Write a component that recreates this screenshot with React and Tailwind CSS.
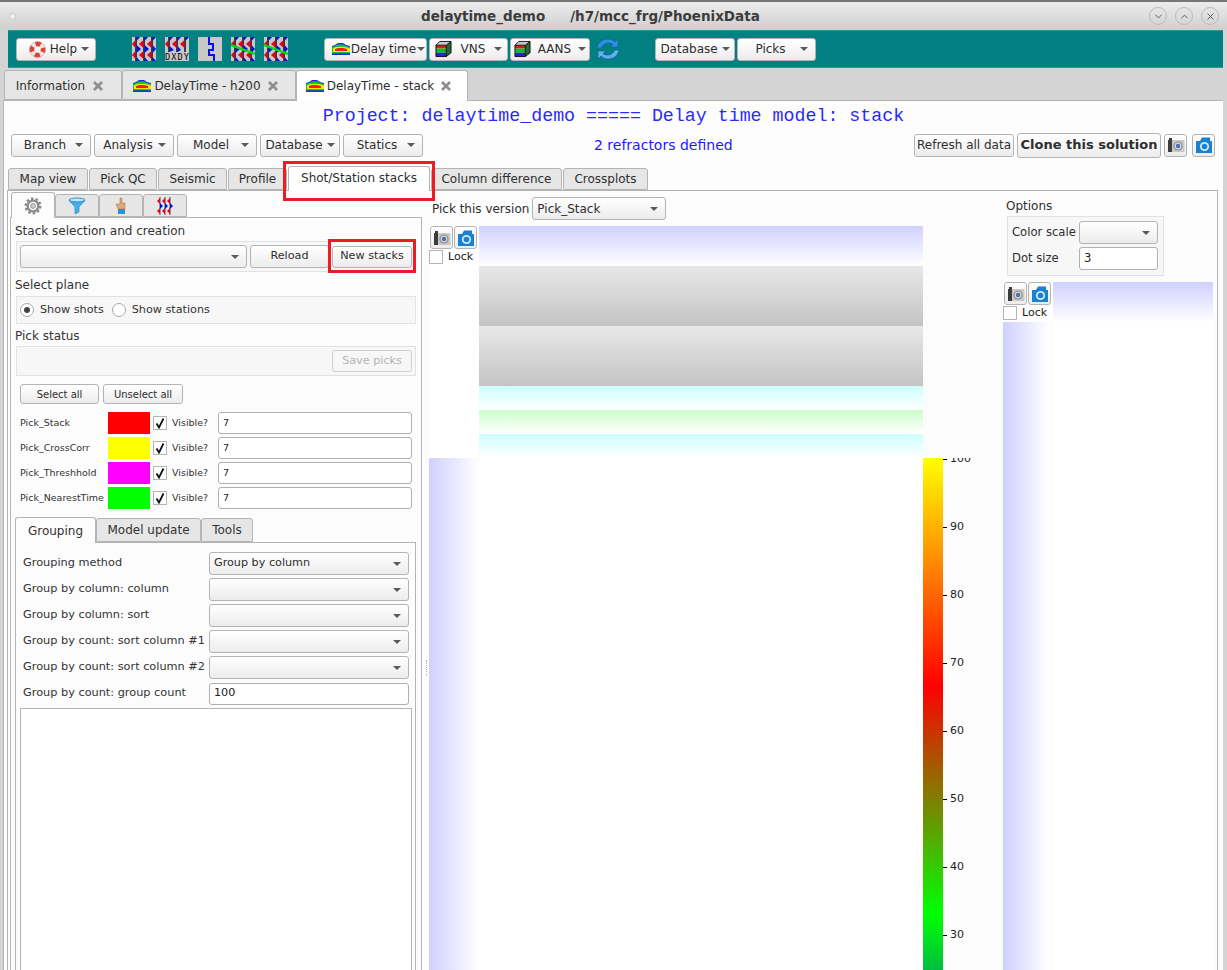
import React from 'react'
import { ChevronDown, ChevronUp, X } from 'lucide-react'

const btn = "flex items-center justify-center rounded-[3px] border border-[#b4b4b4] bg-linear-to-b from-white to-[#ececec] text-[#2e2e2e]"
const caret = "ml-auto w-0 h-0 border-x-[4px] border-x-transparent border-t-[4px] border-t-[#5a5a5a]"
const inputBox = "flex items-center rounded-[3px] border border-[#b0b0b0] bg-white px-[4px] text-[#222]"

const Wiggle = ({ variant }) => {
  const dxdy = variant === 'dxdy'
  return (
    <svg width="24" height="24" viewBox="0 0 24 24" className="shrink-0">
      <rect width="24" height="24" fill="#c8c8c8" />
      <path d={dxdy ? "M4 0V15M12 0V15M20 0V15" : "M4 0V24M12 0V24M20 0V24"} stroke="#000" strokeWidth="1.4" />
      {!dxdy && <>
        <path d="M3.5 3L0 7L3.5 11ZM11.5 3L7 7L11.5 11ZM19.5 3L15 7L19.5 11ZM3.5 14L0 18L3.5 22ZM11.5 14L7 18L11.5 22ZM19.5 14L15 18L19.5 22Z" fill="#e8001c" />
        <path d="M4.5 0H8L4.5 4ZM12.5 0H16L12.5 4ZM20.5 0H24L20.5 4ZM4.5 8L9 12L4.5 16ZM12.5 8L17 12L12.5 16ZM20.5 8L24 12L20.5 16ZM4.5 20L8 24H4.5ZM12.5 20L16 24H12.5ZM20.5 20L24 24H20.5Z" fill="#0010e0" />
      </>}
      {dxdy && <>
        <path d="M3.5 3L0 7L3.5 11ZM11.5 3L7 7L11.5 11ZM19.5 3L15 7L19.5 11Z" fill="#e8001c" />
        <path d="M4.5 0H8L4.5 4ZM12.5 0H16L12.5 4ZM20.5 0H24L20.5 4ZM4.5 9L9 13L4.5 15ZM12.5 9L16 13L12.5 15Z" fill="#0010e0" />
        <text x="12" y="23" textAnchor="middle" fontFamily="'DejaVu Sans Mono',monospace" fontSize="8.6" fill="#000" textLength="24">DXDY</text>
      </>}
      {variant === 'green' && <path d="M0 8L24 17" stroke="#00e000" strokeWidth="2.4" />}
    </svg>
  )
}

const Step = () => (
  <svg width="24" height="24" viewBox="0 0 24 24" className="shrink-0">
    <rect width="24" height="24" fill="#c8c8c8" />
    <path d="M11 0V7H15V13H11V18H16V24" fill="none" stroke="#0010ff" strokeWidth="2" />
  </svg>
)

const Layers = () => (
  <svg width="18" height="12" viewBox="0 0 18 12" className="shrink-0">
    <path d="M0 3L3 2L6 0H11L14 2L18 3V12H0Z" fill="#2030e0" />
    <path d="M0 4L3 3L6 1.5H11L14 3L18 4V10.5H0Z" fill="#18c830" />
    <path d="M1 5.5L4 4H13L18 5.5V9H1Z" fill="#f4e800" />
    <path d="M3 6L6 5H11L15 6V8H3Z" fill="#f02020" />
    <path d="M0 10.5H18V12H0Z" fill="#2030e0" />
  </svg>
)

const Cube = () => (
  <svg width="17" height="18" viewBox="0 0 18 18" className="shrink-0">
    <path d="M1 5H12V8.5H1Z" fill="#e01818" />
    <path d="M1 8.5H12V13H1Z" fill="#18b818" />
    <path d="M1 13H12V17H1Z" fill="#1828e0" />
    <path d="M1 5L5 1H17L12 5Z" fill="#c8c8c8" />
    <path d="M12 5L17 1V13L12 17Z" fill="#286838" />
    <path d="M1 5H12V17H1ZM1 5L5 1H17V13L12 17M12 5L17 1" fill="none" stroke="#000" strokeWidth="0.9" />
  </svg>
)

const Buoy = () => (
  <svg width="17" height="17" viewBox="0 0 18 18" className="shrink-0">
    <circle cx="9" cy="9" r="6" fill="none" stroke="#e9e4e0" strokeWidth="5" />
    <circle cx="9" cy="9" r="6" fill="none" stroke="#e04030" strokeWidth="5" strokeDasharray="5.4 4" strokeDashoffset="2.7" />
    <circle cx="9" cy="9" r="8.4" fill="none" stroke="#b0a8a0" strokeWidth="0.5" />
  </svg>
)

const Refresh = () => (
  <svg width="26" height="26" viewBox="0 0 26 26" className="shrink-0">
    <path d="M2 12C3 6 8 3 13 3C17 3 19 5 20 6L23 3V11H15L18 8.5C15 6 9 6 6 12Z" fill="#2f8fe0" stroke="#12589c" strokeWidth="0.6" />
    <path d="M24 14C23 20 18 23 13 23C9 23 7 21 6 20L3 23V15H11L8 17.5C11 20 17 20 20 14Z" fill="#5eb0ee" stroke="#12589c" strokeWidth="0.6" />
  </svg>
)

const TabX = () => (
  <svg width="12" height="12" viewBox="0 0 12 12" className="shrink-0">
    <path d="M2 2L10 10M10 2L2 10" stroke="#8e8e8e" strokeWidth="2.6" />
  </svg>
)

const CamGray = () => (
  <svg width="18" height="18" viewBox="0 0 18 18">
    <rect x="1" y="4" width="4" height="12" fill="#3c3c3c" />
    <rect x="2" y="2" width="3" height="2" fill="#3c3c3c" />
    <rect x="5" y="4" width="12.5" height="12" rx="1" fill="#c8c8c8" />
    <circle cx="11" cy="10" r="4.6" fill="#8a8a8a" />
    <circle cx="11" cy="10" r="3.4" fill="#d8d8d8" />
    <circle cx="11" cy="10" r="2.2" fill="#4a70b8" />
  </svg>
)

const CamBlue = () => (
  <svg width="18" height="18" viewBox="0 0 18 18">
    <path d="M1 5H5L7 1.5H15V5H17V17H1Z" fill="#1a80d0" />
    <circle cx="9.5" cy="10.5" r="4.6" fill="#d0eafa" />
    <circle cx="9.5" cy="10.5" r="2.8" fill="#1a80d0" />
  </svg>
)

const CamBtn = ({ blue }) => (
  <div className={`${btn} w-[23px] h-[23px] shrink-0`}>{blue ? <CamBlue /> : <CamGray />}</div>
)

const Gear = () => (
  <svg width="18" height="18" viewBox="0 0 18 18">
    <circle cx="9" cy="9" r="7" fill="none" stroke="#8a8a8a" strokeWidth="3" strokeDasharray="2.4 2" />
    <circle cx="9" cy="9" r="5.4" fill="none" stroke="#8e8e8e" strokeWidth="2.4" />
    <circle cx="9" cy="9" r="2.4" fill="#d0d0d0" stroke="#808080" strokeWidth="0.8" />
  </svg>
)

const Funnel = () => (
  <svg width="18" height="18" viewBox="0 0 18 18">
    <ellipse cx="9" cy="3" rx="8" ry="2" fill="#bfe6fa" stroke="#2f9ad8" />
    <path d="M1 3.5L7 10V17L11 15V10L17 3.5Q9 7 1 3.5Z" fill="#47b0e8" stroke="#2484c0" strokeWidth="0.6" />
  </svg>
)

const Hand = () => (
  <svg width="14" height="18" viewBox="0 0 14 18">
    <path d="M6 1H8V6H11V12H4L2 7H6Z" fill="#dfa878" stroke="#a87048" strokeWidth="0.5" />
    <rect x="4" y="12" width="7" height="5" fill="#3090c8" />
  </svg>
)

const SmallWiggle = () => (
  <svg width="16" height="18" viewBox="0 0 16 18">
    <path d="M3 0V18M8 0V18M13 0V18" stroke="#222" strokeWidth="0.8" />
    <path d="M3 1L0 4L3 7ZM8 1L5 4L8 7ZM13 1L10 4L13 7ZM3 11L0 14L3 17ZM8 11L5 14L8 17ZM13 11L10 14L13 17Z" fill="#e8001c" />
    <path d="M3 6L6 9L3 12ZM8 6L11 9L8 12ZM13 6L16 9L13 12Z" fill="#0010e0" />
  </svg>
)

const MenuBtn = ({ label, w, icon, gap = "gap-[4px]", pad = "px-[7px]" }) => (
  <div className={`${btn} ${w} h-[23px] ${pad} ${gap} shrink-0 whitespace-nowrap`}>
    {icon}
    <span className={icon ? "" : "flex-1 text-center"}>{label}</span>
    <span className={caret} />
  </div>
)

const Combo = ({ w, h = "h-[23px]", text }) => (
  <div className={`${btn} ${w} ${h} px-[4px] shrink-0`}>
    <span>{text}</span>
    <span className={caret + " mr-[3px]"} />
  </div>
)

const Tab = ({ w, children, active }) => (
  <div className={`${w} flex items-center justify-center gap-[3px] shrink-0 border border-[#b4b4b4] rounded-t-[3px] pr-[6px] ${active ? "h-[31px] -mb-px border-b-0 bg-white z-10" : "h-[30px] bg-[#e6e6e6] pt-[2px]"}`}>
    {children}
  </div>
)

const ViewTab = ({ w, children, active }) => (
  <div className={`${w} flex items-center justify-center shrink-0 border border-[#b4b4b4] rounded-t-[3px] ${active ? "h-[25px] -mb-px border-b-0 bg-white z-10 pb-[3px]" : "h-[22px] bg-[#e6e6e6]"}`}>
    {children}
  </div>
)

const SubTab = ({ w, children, active, h }) => (
  <div className={`${w} ${h} flex items-center justify-center shrink-0 border border-[#b4b4b4] rounded-t-[3px] ${active ? "-mb-px border-b-0 bg-[#fcfcfc] z-10" : "bg-[#e6e6e6]"}`}>
    {children}
  </div>
)

const Check = ({ on, w = "w-[14px] h-[14px]" }) => (
  <div className={`${w} shrink-0 border border-[#b4b4b4] bg-white flex items-center justify-center`}>
    {on && <svg width="12" height="12" viewBox="0 0 12 12"><path d="M2.5 6.5L5 10.5L9.5 1.5" fill="none" stroke="#111" strokeWidth="1.8" /></svg>}
  </div>
)

const PickRow = ({ name, color }) => (
  <div className="flex items-center h-[22px]">
    <span className="w-[88px] shrink-0 text-[9.5px] text-[#333]">{name}</span>
    <div className={`w-[42px] h-[22px] shrink-0 ${color}`} />
    <div className="ml-[3px]"><Check on /></div>
    <span className="ml-[5px] w-[46px] shrink-0 text-[9.5px] text-[#333]">Visible?</span>
    <div className={`${inputBox} w-[194px] h-[22px] text-[9.5px]`}>7</div>
  </div>
)

const FormRow = ({ label, children }) => (
  <div className="flex items-center h-[23px]">
    <span className="w-[186px] shrink-0 text-[11.3px] text-[#333] whitespace-nowrap">{label}</span>
    {children}
  </div>
)

const Tick = ({ v }) => (
  <div className="flex items-center h-[68px] shrink-0">
    <span className="w-[4px] h-px bg-black" />
    <span className="ml-[3px] text-[11px] text-[#222]">{v}</span>
  </div>
)

const PlotTools = ({ w, h }) => (
  <div className={`${w} ${h} shrink-0 bg-white`}>
    <div className="flex gap-[1px] pl-px"><CamBtn /><CamBtn blue /></div>
    <div className="flex items-center text-[11px] text-[#222]">
      <Check w="w-[14px] h-[14px]" />
      <span className="ml-[5px]">Lock</span>
    </div>
  </div>
)

export default function App() {
  return (
    <div className="relative w-[1227px] h-[970px] overflow-hidden bg-[#d4d4d4] font-['DejaVu_Sans',sans-serif] text-[12px] text-[#2e2e2e]">
      {/* window title */}
      <div className="h-[30px] flex items-center border-t-2 border-[#777] bg-linear-to-b from-[#ececec] to-[#cfcfcf] pl-[9px] pr-[7px]">
        <span className="w-[7px] h-[7px] rounded-full bg-[#f2f2f2] border border-[#c4c4c4]" />
        <div className="ml-[405px] w-[344px] flex font-bold text-[13.5px] text-[#3c3c3c]">
          <span>delaytime_demo</span>
          <span className="ml-[25px]">/h7/mcc_frg/PhoenixData</span>
        </div>
        <div className="ml-auto flex gap-[8px] mr-px">
          <span className="w-[18px] h-[18px] rounded-full border border-[#bcbcbc] flex items-center justify-center"><ChevronDown size={11} color="#555" /></span>
          <span className="w-[18px] h-[18px] rounded-full border border-[#bcbcbc] flex items-center justify-center"><ChevronUp size={11} color="#555" /></span>
          <span className="w-[18px] h-[18px] rounded-full border border-[#bcbcbc] flex items-center justify-center"><X size={11} color="#555" /></span>
        </div>
      </div>

      {/* main toolbar */}
      <div className="ml-[8px] mr-[4px] h-[38px] bg-[#008080] flex items-center pl-[8px] border-y border-[#2a9a94]">
        <div className={`${btn} w-[80px] h-[23px] pl-[13px] pr-[5px] gap-[4px]`}>
          <Buoy />
          <span>Help</span>
          <span className={caret + " mr-[2px]"} />
        </div>
        <div className="ml-[36px] flex gap-[9px]">
          <Wiggle />
          <Wiggle variant="dxdy" />
          <Step />
          <Wiggle variant="green" />
          <Wiggle variant="green" />
        </div>
        <div className="ml-[36px] flex gap-[2px]">
          <MenuBtn label="Delay time" w="w-[103px]" icon={<Layers />} gap="gap-[1px]" pad="pl-[7px] pr-[1px]" />
          <MenuBtn label="VNS" w="w-[79px]" icon={<Cube />} gap="gap-[9px]" />
          <MenuBtn label="AANS" w="w-[80px]" icon={<Cube />} gap="gap-[7px]" />
        </div>
        <div className="ml-[5px]"><Refresh /></div>
        <div className="ml-[34px] flex gap-[2px]">
          <MenuBtn label="Database" w="w-[80px]" />
          <MenuBtn label="Picks" w="w-[79px]" />
        </div>
      </div>

      {/* document tabs */}
      <div className="ml-[4px] h-[32px] flex items-end relative">
        <Tab w="w-[118px]">Information <span className="ml-[4px]"><TabX /></span></Tab>
        <Tab w="w-[174px]"><Layers /> DelayTime - h200 <span className="ml-[3px]"><TabX /></span></Tab>
        <Tab w="w-[172px]" active><Layers /> DelayTime - stack <span className="ml-[3px]"><TabX /></span></Tab>
      </div>

      <div className="ml-[3px] mr-[4px] h-[870px] border-t border-l border-[#b4b4b4] bg-[#fdfdfd]">
        <div className="h-[29px] flex items-center justify-center font-['Liberation_Mono',monospace] text-[18.3px] text-[#2a2aff] pt-[2px]">
          Project: delaytime_demo ===== Delay time model: stack
        </div>

        {/* action row */}
        <div className="mt-[3px] h-[24px] flex items-center pl-[7px] pr-[8px]">
          <div className="flex gap-[3px]">
            <MenuBtn label="Branch" w="w-[80px]" />
            <MenuBtn label="Analysis" w="w-[80px]" />
            <MenuBtn label="Model" w="w-[80px]" />
            <MenuBtn label="Database" w="w-[80px]" />
            <MenuBtn label="Statics" w="w-[80px]" />
          </div>
          <span className="ml-[171px] text-[14px] text-[#1a1aff] whitespace-nowrap">2 refractors defined</span>
          <div className="ml-auto flex items-center gap-[3px]">
            <div className={`${btn} w-[100px] h-[23px] whitespace-nowrap text-[12px]`}>Refresh all data</div>
            <div className={`${btn} w-[144px] h-[25px] whitespace-nowrap font-bold text-[13px]`}>Clone this solution</div>
            <CamBtn />
            <div className="ml-[2px]"><CamBtn blue /></div>
          </div>
        </div>

        {/* view tabs */}
        <div className="mt-[10px] pl-[4px] h-[23px] flex items-end gap-px">
          <ViewTab w="w-[80px]">Map view</ViewTab>
          <ViewTab w="w-[68px]">Pick QC</ViewTab>
          <ViewTab w="w-[69px]">Seismic</ViewTab>
          <ViewTab w="w-[59px]">Profile</ViewTab>
          <div className="relative z-10 flex items-end shrink-0">
            <ViewTab w="w-[142px]" active>Shot/Station stacks</ViewTab>
            <div className="absolute left-[-5px] top-[-5px] w-[152px] h-[40px] border-[3px] border-[#ec1c24]" />
          </div>
          <ViewTab w="w-[131px]">Column difference</ViewTab>
          <ViewTab w="w-[85px]">Crossplots</ViewTab>
        </div>

        <div className="ml-[3px] mr-[5px] h-[781px] border border-[#b4b4b4] bg-[#fcfcfc] flex overflow-hidden">
          {/* left column */}
          <div className="w-[416px] shrink-0 pl-[2px] pt-px">
            <div className="h-[25px] flex items-end pl-px">
              <SubTab w="w-[44px]" h="h-[26px]" active><Gear /></SubTab>
              <SubTab w="w-[44px]" h="h-[23px]"><Funnel /></SubTab>
              <SubTab w="w-[44px]" h="h-[23px]"><Hand /></SubTab>
              <SubTab w="w-[44px]" h="h-[23px]"><SmallWiggle /></SubTab>
            </div>
            <div className="w-[412px] h-[760px] border border-[#b4b4b4] bg-[#fcfcfc] pl-[4px] text-[11.2px] text-[#333]">
              <div className="mt-[4px] text-[12px]">Stack selection and creation</div>
              <div className="relative mt-px ml-px w-[400px] h-[31px] border border-[#e2e2e2] bg-[#f7f7f7] flex items-center pl-[3px] gap-[3px]">
                <Combo w="w-[227px]" />
                <div className={`${btn} w-[79px] h-[23px]`}>Reload</div>
                <div className={`${btn} w-[80px] h-[22px]`}>New stacks</div>
                <div className="absolute left-[311px] top-[-3px] w-[88px] h-[34px] border-[3px] border-[#ec1c24]" />
              </div>
              <div className="mt-[4px] text-[12px]">Select plane</div>
              <div className="mt-[2px] ml-px w-[400px] h-[28px] border border-[#e2e2e2] bg-[#f7f7f7] flex items-center pl-[3px]">
                <span className="w-[14px] h-[14px] rounded-full border border-[#a8a8a8] bg-white flex items-center justify-center">
                  <span className="w-[6px] h-[6px] rounded-full bg-[#444]" />
                </span>
                <span className="ml-[6px]">Show shots</span>
                <span className="ml-[8px] w-[14px] h-[14px] rounded-full border border-[#a8a8a8] bg-white" />
                <span className="ml-[6px]">Show stations</span>
              </div>
              <div className="mt-[3px] text-[12px]">Pick status</div>
              <div className="mt-px ml-px w-[400px] h-[30px] border border-[#e2e2e2] bg-[#f7f7f7] flex items-center justify-end pr-[3px]">
                <div className="flex items-center justify-center w-[80px] h-[22px] rounded-[3px] border border-[#d0d0d0] text-[#b4b4b4]">Save picks</div>
              </div>
              <div className="mt-[8px] ml-[5px] flex gap-[4px] text-[10px]">
                <div className={`${btn} w-[79px] h-[20px]`}>Select all</div>
                <div className={`${btn} w-[80px] h-[20px]`}>Unselect all</div>
              </div>
              <div className="mt-[8px] ml-[5px] flex flex-col gap-[3px]">
                <PickRow name="Pick_Stack" color="bg-[#ff0000]" />
                <PickRow name="Pick_CrossCorr" color="bg-[#ffff00]" />
                <PickRow name="Pick_Threshhold" color="bg-[#ff00ff]" />
                <PickRow name="Pick_NearestTime" color="bg-[#00ff00]" />
              </div>

              <div className="mt-[7px] h-[26px] flex items-end text-[12px]">
                <SubTab w="w-[81px]" h="h-[26px]" active>Grouping</SubTab>
                <SubTab w="w-[105px]" h="h-[24px]">Model update</SubTab>
                <SubTab w="w-[52px]" h="h-[24px]">Tools</SubTab>
              </div>
              <div className="w-[401px] h-[440px] border border-[#b4b4b4] pl-[7px] pt-[9px]">
                <div className="flex flex-col gap-[3px]">
                  <FormRow label="Grouping method"><Combo w="w-[200px]" text="Group by column" /></FormRow>
                  <FormRow label="Group by column: column"><Combo w="w-[200px]" /></FormRow>
                  <FormRow label="Group by column: sort"><Combo w="w-[200px]" /></FormRow>
                  <FormRow label="Group by count: sort column #1"><Combo w="w-[200px]" /></FormRow>
                  <FormRow label="Group by count: sort column #2"><Combo w="w-[200px]" /></FormRow>
                  <FormRow label="Group by count: group count"><div className={`${inputBox} w-[200px] h-[22px]`}>100</div></FormRow>
                </div>
                <div className="mt-[3px] -ml-[3px] w-[392px] h-[300px] border border-[#b4b4b4] bg-white" />
              </div>
            </div>
          </div>

          {/* center column */}
          <div className="w-[576px] shrink-0 pl-[5px] flex">
            <div className="w-[4px] -ml-[5px] mr-px flex flex-col items-center pt-[469px]">
              <span className="h-[16px] border-l border-dotted border-[#b0b0b0]" />
            </div>
            <div className="flex-1">
              <div className="mt-[6px] h-[23px] flex items-center pl-[3px] text-[12px]">
                <span>Pick this version</span>
                <div className="ml-[3px]"><Combo w="w-[134px]" text="Pick_Stack" /></div>
              </div>
              <div className="mt-[6px] flex">
                <div className="w-[50px] shrink-0 flex flex-col h-[744px]">
                  <PlotTools w="w-[50px]" h="h-[232px]" />
                  <div className="flex-1 bg-linear-to-r from-[#d0d0ff] to-white" />
                </div>
                <div className="w-[444px] shrink-0 flex flex-col bg-white h-[744px]">
                  <div className="h-[40px] bg-linear-to-b from-[#d0d0ff] to-white" />
                  <div className="h-[60px] bg-linear-to-b from-[#e8e8e8] to-[#c4c4c4]" />
                  <div className="h-[60px] bg-linear-to-b from-[#e8e8e8] to-[#c4c4c4]" />
                  <div className="h-[24px] bg-linear-to-b from-[#ccffff] to-white" />
                  <div className="h-[24px] bg-linear-to-b from-[#ccffcc] to-white" />
                  <div className="h-[24px] bg-linear-to-b from-[#ccffff] to-white" />
                </div>
                <div className="mt-[232px] h-[512px] overflow-hidden flex">
                  <div className="w-[20px] h-[681px] shrink-0 bg-[linear-gradient(to_bottom,#ffff00_0px,#ff0000_228px,#00ff00_455px,#0000ff_681px)]" />
                  <div className="-mt-[33px]">
                    {[100, 90, 80, 70, 60, 50, 40, 30].map(v => <Tick key={v} v={v} />)}
                  </div>
                </div>
              </div>
            </div>
          </div>

          {/* right column */}
          <div className="flex-1 pl-[3px]">
            <div className="mt-[6px] ml-[3px] text-[12px]">Options</div>
            <div className="mt-px ml-[4px] w-[157px] h-[60px] border border-[#e2e2e2] bg-[#f7f7f7] pl-[4px] pt-[4px] flex flex-col gap-[3px] text-[11.6px]">
              <div className="flex items-center h-[23px]">
                <span className="w-[67px] shrink-0">Color scale</span>
                <Combo w="w-[79px]" />
              </div>
              <div className="flex items-center h-[23px]">
                <span className="w-[67px] shrink-0">Dot size</span>
                <div className={`${inputBox} w-[79px] h-[23px]`}>3</div>
              </div>
            </div>
            <div className="mt-[6px] flex h-[688px]">
              <div className="w-[50px] shrink-0 flex flex-col">
                <PlotTools w="w-[50px]" h="h-[40px]" />
                <div className="w-[46px] flex-1 bg-linear-to-r from-[#d0d0ff] to-white" />
              </div>
              <div className="w-[160px] shrink-0 bg-white">
                <div className="h-[40px] bg-linear-to-b from-[#d0d0ff] to-white" />
              </div>
            </div>
          </div>
        </div>
      </div>
    </div>
  )
}
